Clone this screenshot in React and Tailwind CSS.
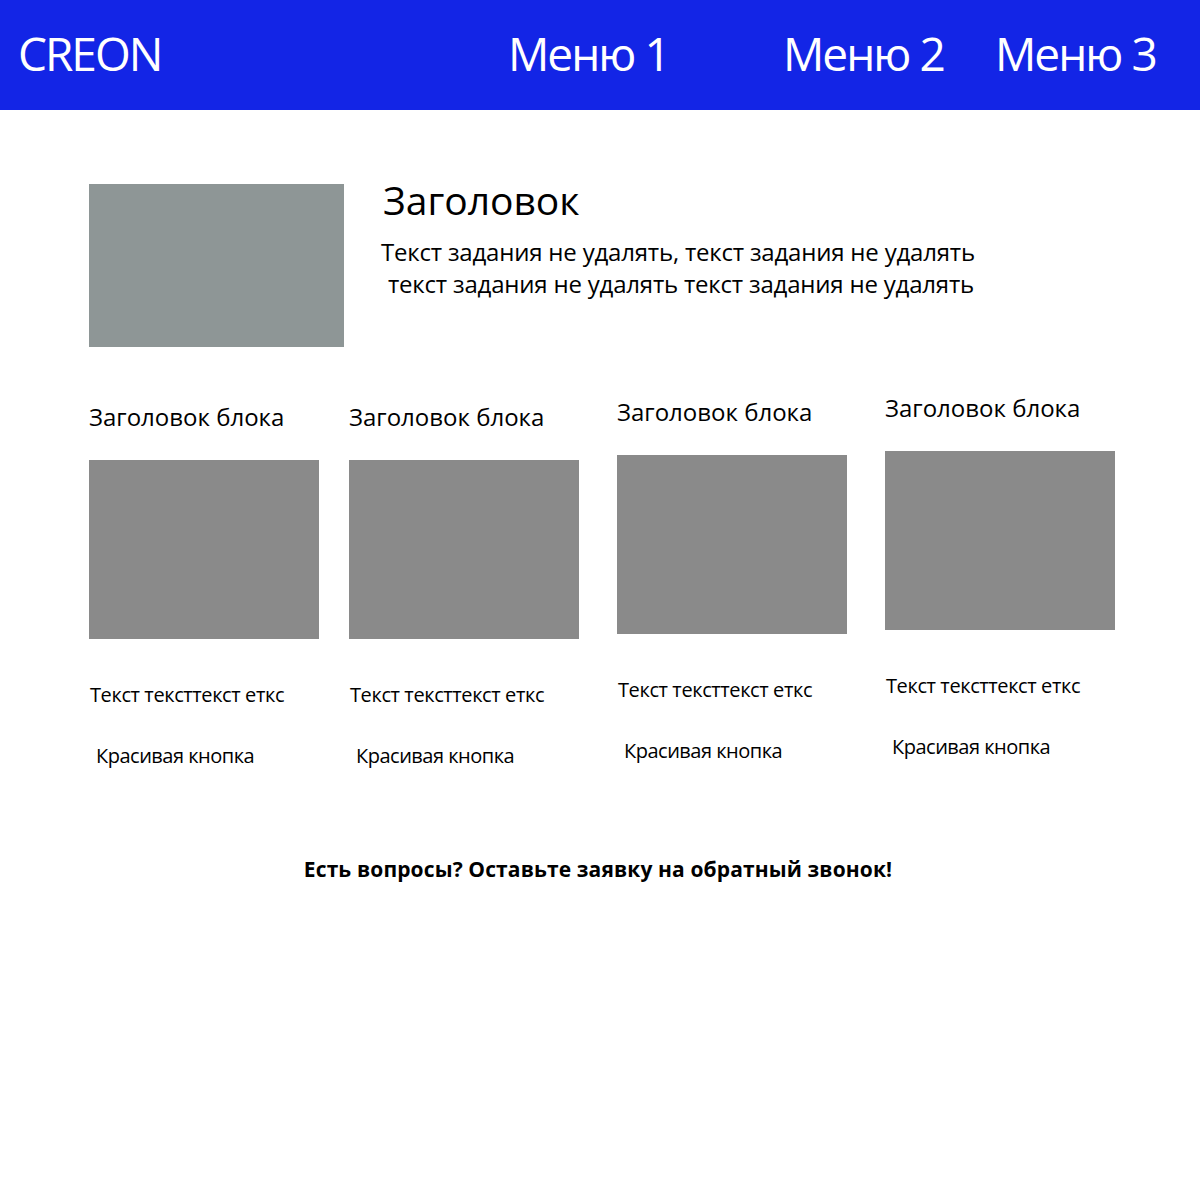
export default function App() {
  const blocks = [
    { mt: "mt-[9px]", ml: "" },
    { mt: "mt-[9px]", ml: "ml-[30px]" },
    { mt: "mt-[4px]", ml: "ml-[38px]" },
    { mt: "mt-0", ml: "ml-[38px]" },
  ];
  return (
    <div className="w-[1200px] h-[1200px] bg-white text-black" style={{ fontFamily: '"Open Sans", "Noto Sans", sans-serif' }}>
      <header className="h-[110px] bg-[#1325e6] text-white flex items-start pt-[30px] pl-[18px] text-[46px] leading-none tracking-[-2px]">
        <div className="w-[490px]">CREON</div>
        <div className="w-[275px]">Меню 1</div>
        <div className="w-[212px]">Меню 2</div>
        <div>Меню 3</div>
      </header>
      <main className="px-[89px]">
        <section className="mt-[74px] flex items-start">
          <div className="w-[255px] h-[163px] bg-[#8e9696] shrink-0" />
          <div className="ml-[37px] -mt-1">
            <h1 className="text-[39px] leading-none ml-[2px]">Заголовок</h1>
            <p className="mt-[17px] text-[24px] leading-[32px] tracking-[-0.2px]">
              <span className="block">Текст задания не удалять, текст задания не удалять</span>
              <span className="block pl-[7px]">текст задания не удалять текст задания не удалять</span>
            </p>
          </div>
        </section>
        <section className="mt-[49px] flex items-start">
          {blocks.map((b, i) => (
            <div key={i} className={`w-[230px] shrink-0 ${b.mt} ${b.ml}`}>
              <h2 className="text-[24px] leading-none">Заголовок блока</h2>
              <div className="mt-[31px] w-[230px] h-[179px] bg-[#8a8a8a]" />
              <p className="mt-[46px] text-[20px] leading-none pl-[1px] tracking-[-0.4px]">Текст тексттекст еткс</p>
              <p className="mt-[41px] text-[20px] leading-none pl-[7px] tracking-[-0.5px]">Красивая кнопка</p>
            </div>
          ))}
        </section>
      </main>
      <p className="mt-[93px] text-center pr-[4px] text-[21px] leading-none font-bold tracking-[0.12px]">
        Есть вопросы? Оставьте заявку на обратный звонок!
      </p>
    </div>
  );
}
